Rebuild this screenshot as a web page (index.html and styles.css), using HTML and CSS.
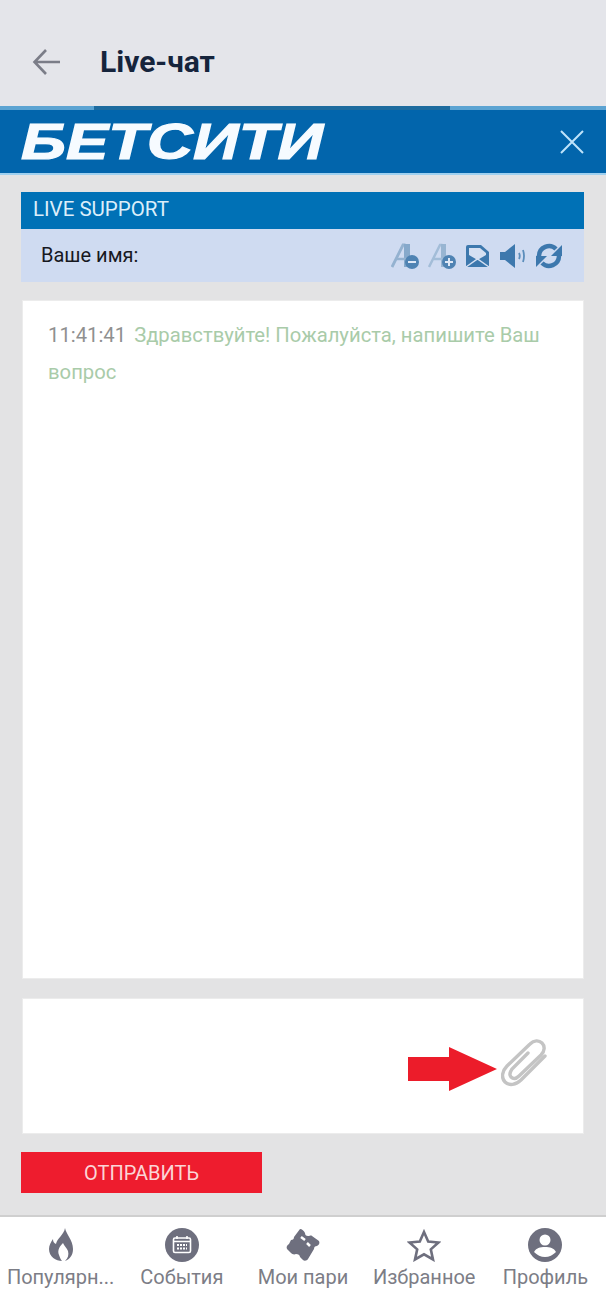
FILE: index.html
```html
<!DOCTYPE html>
<html>
  <head>
    <title>Live-чат</title>
    <link rel="stylesheet" href="styles.css">
  </head>
  <body>
    <header class="topbar">
      <svg class="back" width="30" height="30" viewBox="0 0 30 30"><path d="M28 15H3M14 3 2.5 15 14 27" fill="none" stroke="#7b7d88" stroke-width="2.6"/></svg>
      <h1>Live-чат</h1>
    </header>

    <div class="brand">
      <div class="brand-line"><span></span></div>
      <div class="brand-row">
        <span class="logo">БЕТСИТИ</span>
        <svg width="26" height="26" viewBox="0 0 26 26"><path d="M2 2 24 24M24 2 2 24" stroke="#bfe3fb" stroke-width="2"/></svg>
      </div>
    </div>

    <main class="content">
      <section class="support">
        <div class="support-title">LIVE SUPPORT</div>
        <div class="support-bar">
          <span class="name-label">Ваше имя:</span>
          <div class="tools">
            <svg width="28" height="28" viewBox="0 0 28 28"><path d="M1 25 12 3h2.500" fill="none" stroke="#94b2d0" stroke-width="2.800"/><path d="M13 2v23h6V2z" fill="#86a9cb"/><path d="M6 17h9" stroke="#94b2d0" stroke-width="2.500"/><circle cx="21" cy="20" r="7" fill="#4f83b3"/><path d="M17 20h8" stroke="#dfe8f6" stroke-width="2"/></svg>
            <svg width="28" height="28" viewBox="0 0 28 28"><path d="M1 25 12 3h2.500" fill="none" stroke="#a3bdd8" stroke-width="2.500"/><path d="M13 2v23h5V2z" fill="#98b5d2"/><path d="M6 17h9" stroke="#a3bdd8" stroke-width="2.500"/><circle cx="21" cy="20" r="7" fill="#4f83b3"/><path d="M17 20h8M21 16v8" stroke="#dfe8f6" stroke-width="2"/></svg>
            <svg width="25" height="24" viewBox="0 0 25 24"><path d="M1 23V3a2 2 0 0 1 2-2h13l8 7v15z" fill="#3d78ad"/><path d="M4 4h11l6 5v2l-8.500 5L4 11z" fill="#d5e0f2"/><path d="M1 23l11.500-8L24 23" fill="none" stroke="#d5e0f2" stroke-width="1.500"/></svg>
            <svg width="27" height="26" viewBox="0 0 27 26"><path d="M1 9h5l10-8v24L6 17H1z" fill="#3d78ad"/><path d="M20 10q1.500 3 0 6M24 7q2 6 0 12" fill="none" stroke="#5b8dbb" stroke-width="1.800"/></svg>
            <svg width="28" height="26" viewBox="0 0 28 26"><path d="M4 13a10 10 0 0 1 17-7" fill="none" stroke="#3d78ad" stroke-width="4.500"/><path d="M27 2v11H16z" fill="#3d78ad"/><path d="M24 13a10 10 0 0 1-17 7" fill="none" stroke="#3d78ad" stroke-width="4.500"/><path d="M1 24V13h11z" fill="#3d78ad"/></svg>
          </div>
        </div>
      </section>

      <section class="chat">
        <p class="message"><span class="time">11:41:41</span> <span class="text">Здравствуйте! Пожалуйста, напишите Ваш</span> <span class="text">вопрос</span></p>
      </section>

      <section class="compose">
        <svg class="pointer" width="91" height="46" viewBox="0 0 91 46"><path d="M1 11h41V1l48 22-48 22V35H1z" fill="#ec1c2a"/></svg>
        <svg class="clip" width="46" height="48" viewBox="0 0 46 48"><path d="M44 17 20 41c-5 5-12 6-16 2s-3-11 2-16L29 5c4-4 9-4 12-1s3 8-1 12L18 37c-3 3-6 3-8 1s-1-5 1-8l16-16" fill="none" stroke="#c4c4c4" stroke-width="3.400" stroke-linecap="round"/></svg>
      </section>

      <button class="send">ОТПРАВИТЬ</button>
    </main>

    <nav class="tabs">
      <a class="tab">
        <svg width="26" height="34" viewBox="0 0 26 34"><path d="M17 0c1 6 8 12 8 21 0 6-3 10-8 12 3-3 4-6 3-10-1-3-4-5-5-8-3 3-6 7-4 12 1 3 2 5 3 6C8 33 1 29 1 21c0-4 2-7 4-10 0 3 1 4 3 5 1-6 8-9 9-16z" fill="#6e6f7e"/></svg>
        <span>Популярн...</span>
      </a>
      <a class="tab">
        <svg width="34" height="34" viewBox="0 0 34 34"><circle cx="17" cy="17" r="17" fill="#6e6f7e"/><rect x="8.500" y="10" width="17" height="14.500" rx="1.500" fill="none" stroke="#fff" stroke-width="1.600"/><path d="M8.500 13.500h17M12 8v3M22 8v3" stroke="#fff" stroke-width="1.600"/><path d="M12 17h10M12 20.500h10" stroke="#fff" stroke-width="2" stroke-dasharray="2 1"/></svg>
        <span>События</span>
      </a>
      <a class="tab">
        <svg width="36" height="34" viewBox="0 0 36 34"><path d="M15 1c2 0 4 2 5 4 0 2 1 3 3 3s3-1 4 0l7 5c1 2 0 4-2 5-2 0-3 1-3 3l-6 10c-1 2-4 2-5 1l-3-3c0-2-2-3-4-3-2 1-4 0-5-1l-4-4c-1-2 0-4 2-5l2-4c2 0 3-1 3-3z" fill="#6e6f7e"/><path d="M16 9l4 3M22 15l3 3" stroke="#fff" stroke-width="2.500"/></svg>
        <span>Мои пари</span>
      </a>
      <a class="tab">
        <svg width="34" height="32" viewBox="0 0 34 32"><path d="M17 3l4.200 9.500 10.300 1-7.700 6.900 2.200 10.100-9-5.200-9 5.200 2.200-10.100-7.700-6.900 10.300-1z" fill="none" stroke="#6e6f7e" stroke-width="2.600"/></svg>
        <span>Избранное</span>
      </a>
      <a class="tab">
        <svg width="34" height="34" viewBox="0 0 34 34"><circle cx="17" cy="17" r="17" fill="#6e6f7e"/><circle cx="17" cy="12" r="5.500" fill="#fff"/><path d="M6 24c2-4 6-5 11-5s9 1 11 5c-3 3-7 5-11 5s-8-2-11-5z" fill="#fff"/></svg>
        <span>Профиль</span>
      </a>
    </nav>
  </body>
</html>
```

FILE: styles.css
```css
/* Page */
html, body { height: 100%; }
body {
  margin: 0;
  height: 1297px;
  display: flex;
  flex-direction: column;
  overflow: hidden;
  background: #e3e3e4;
  font-family: Roboto, "Liberation Sans", sans-serif;
}

/* Top bar */
.topbar {
  height: 106px;
  box-sizing: border-box;
  padding: 47px 0 0 32px;
  display: flex;
  align-items: flex-start;
  background: #e4e5ea;
}
.back { flex: none; }
.topbar h1 {
  margin: 0 0 0 38px;
  font-size: 30px;
  line-height: 30px;
  font-weight: 700;
  color: #15243c;
}

/* Brand band */
.brand { height: 67px; background: #0265ac; border-bottom: 2px solid #9fd0ef; }
.brand-line { height: 4px; background: #5ba3d2; }
.brand-line span { display: block; height: 4px; margin: 0 156px 0 94px; background: #1d6b9f; }
.brand-row {
  height: 63px;
  box-sizing: border-box;
  padding: 0 21px;
  display: flex;
  justify-content: space-between;
  align-items: center;
}
.logo {
  font-family: "Liberation Sans", sans-serif;
  font-size: 50px;
  line-height: 50px;
  font-weight: 700;
  font-style: italic;
  color: #f6fbff;
  -webkit-text-stroke: 1.200px #f6fbff;
  transform: scaleX(1.270);
  transform-origin: left center;
}

/* Content column */
.content {
  flex: 1;
  padding: 17px 22px 0 21px;
  display: flex;
  flex-direction: column;
  align-items: stretch;
}
.support-title {
  height: 37px;
  padding-left: 12px;
  background: #0071b6;
  color: #dceefa;
  font-size: 20.500px;
  line-height: 35px;
}
.support-bar {
  height: 53px;
  padding: 0 21px 0 20px;
  display: flex;
  justify-content: space-between;
  align-items: center;
  background: #cfdbf1;
}
.name-label { font-size: 20px; color: #17181f; margin-bottom: 1px; }
.tools { display: flex; align-items: center; gap: 9px; }

.chat {
  height: 679px;
  margin: 18px 0 0 1px;
  padding: 16px 25px;
  box-sizing: border-box;
  background: #fff;
  border: 1px solid #ececec;
}
.message {
  margin: 0;
  font-size: 20.250px;
  line-height: 37px;
}
.time { margin-right: 3px; color: #8f9090; }
.text { color: #a9cba9; }

.compose {
  height: 136px;
  margin: 19px 0 0 1px;
  padding-right: 36px;
  box-sizing: border-box;
  display: flex;
  justify-content: flex-end;
  align-items: center;
  background: #fff;
  border: 1px solid #ececec;
}
.pointer { margin: 6px 3px 0 0; }
.clip { margin-top: -6px; }

.send {
  width: 241px;
  height: 41px;
  margin-top: 18px;
  padding: 0;
  border: 0;
  background: #ee1c2e;
  color: #fbd5d6;
  font-family: Roboto, "Liberation Sans", sans-serif;
  font-size: 20px;
}

/* Bottom tabs */
.tabs {
  height: 82px;
  box-sizing: border-box;
  padding-top: 11px;
  display: grid;
  grid-template-columns: repeat(5, 1fr);
  background: #fff;
  border-top: 2px solid #cfcfcf;
}
.tab {
  display: flex;
  flex-direction: column;
  align-items: center;
  color: #7c7d86;
  font-size: 20px;
  line-height: 26px;
  white-space: nowrap;
}
.tab svg { height: 34px; flex: none; margin-bottom: 2px; }
```
